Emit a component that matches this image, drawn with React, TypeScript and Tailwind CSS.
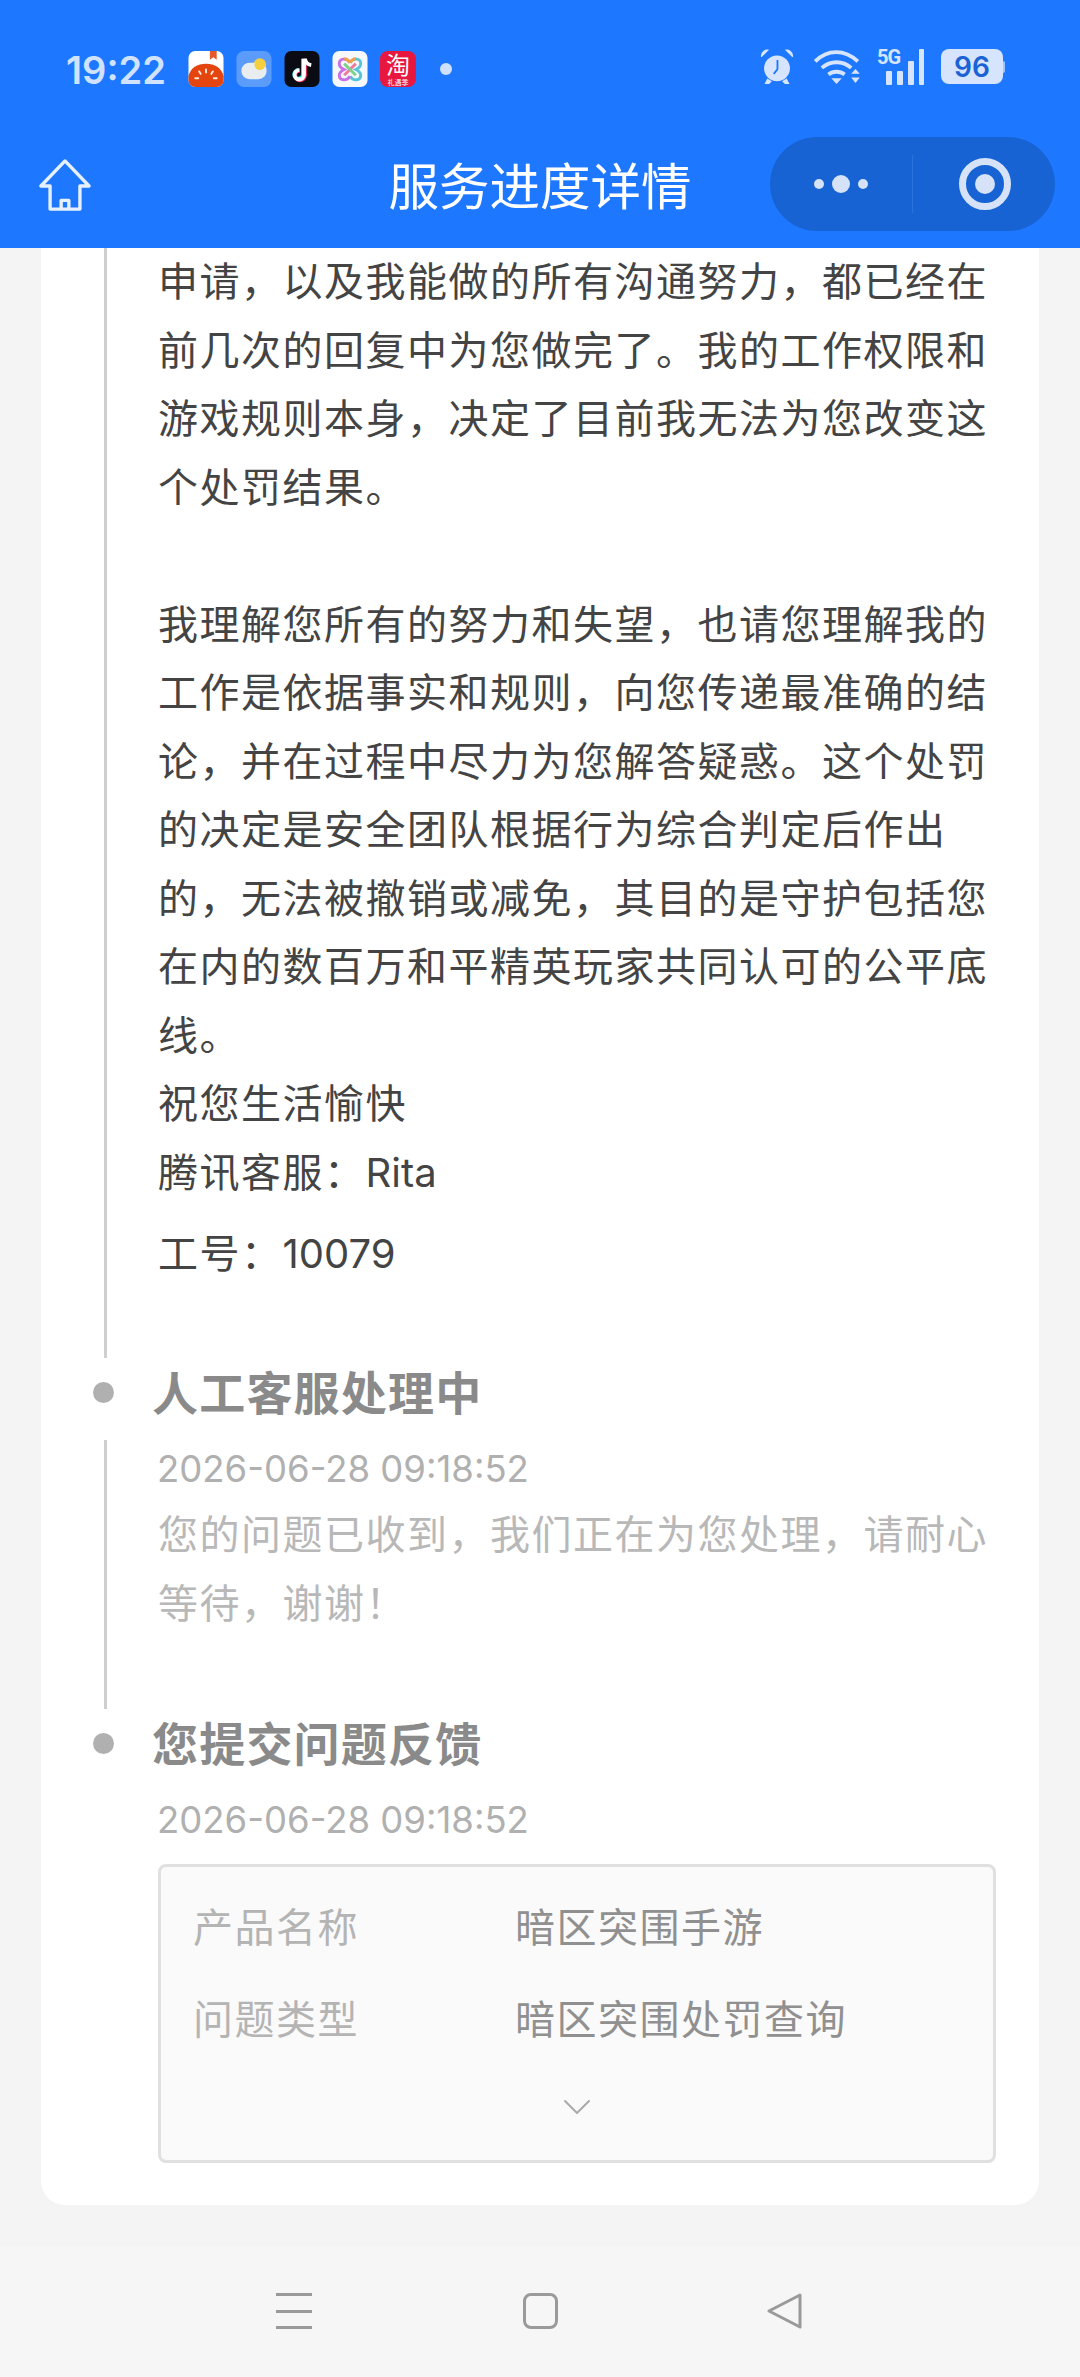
import { ChevronDown } from "lucide-react";

const cjk = "font-['Inter','Noto_Sans_CJK_SC',sans-serif]";

function StatusApps() {
  return (
    <div className="flex items-center gap-[12px] -translate-x-[1px] -translate-y-[1px]">
      {/* tomato novel */}
      <svg width="36" height="36" viewBox="0 0 36 37">
        <rect width="36" height="37" rx="7" fill="#fff" />
        <path d="M0 30V26C2 17 9 13 18 13s16 4 18 13v4a7 7 0 0 1-7 7H7a7 7 0 0 1-7-7z" fill="#e4450f" />
        <path d="M22 0h7v9l-3.500-2.500L22 9z" fill="#e4592b" />
        <g stroke="#ffe9d8" strokeWidth="2" strokeLinecap="round">
          <path d="M18 19v3M11 21l1.500 2.500M25 21l-1.500 2.500M7 28h3M26 28h3" />
        </g>
      </svg>
      {/* weather */}
      <svg width="36" height="36" viewBox="0 0 36 37">
        <rect width="36" height="37" rx="8" fill="#5b9cfb" />
        <circle cx="24" cy="14" r="6.500" fill="#f6cf3f" />
        <rect x="5" y="12" width="26" height="17" rx="8.500" fill="#e9edf0" />
        <circle cx="24" cy="14" r="5.500" fill="#f6cf3f" />
      </svg>
      {/* douyin */}
      <svg width="36" height="36" viewBox="0 0 36 37">
        <rect width="36" height="37" rx="7" fill="#0b0b14" />
        <path d="M19 8v16a4.500 4.500 0 1 1-4.500-4.500" fill="none" stroke="#26e0de" strokeWidth="4" />
        <path d="M21 8v17a5 5 0 1 1-5-5" fill="none" stroke="#f5305c" strokeWidth="4" />
        <path d="M20 8v16.500a4.800 4.800 0 1 1-4.800-4.800" fill="none" stroke="#fff" strokeWidth="4" />
        <path d="M21 8c.5 3.500 3 6 6.500 6.500" fill="none" stroke="#fff" strokeWidth="4" />
      </svg>
      {/* multicolour knot */}
      <svg width="36" height="36" viewBox="0 0 36 37">
        <rect width="36" height="37" rx="7" fill="#f6f8fb" />
        <path d="M18 12c3-5 11-5 11 1 0 3-3 5-5 6 2 1 5 3 5 6 0 6-8 6-11 1" fill="none" stroke="#58c4d8" strokeWidth="3" />
        <path d="M18 12c-3-5-11-5-11 1 0 3 3 5 5 6-2 1-5 3-5 6 0 6 8 6 11 1" fill="none" stroke="#c872e4" strokeWidth="3" />
        <path d="M12 8c2 0 4 1 6 4M24 8c-2 0-4 1-6 4" fill="none" stroke="#f2a04a" strokeWidth="3" />
        <path d="M24 13 12 25" stroke="#f27a9a" strokeWidth="3" />
        <path d="M12 13l12 12" stroke="#7fd08a" strokeWidth="3" />
      </svg>
      {/* taobao */}
      <div className="w-[36px] h-[36px] rounded-[8px] bg-[#e8173f] flex flex-col items-center">
        <span className="text-[24px] leading-[26px] text-white font-['Noto_Sans_CJK_SC',sans-serif]">淘</span>
        <div className="w-full h-[10px] text-[7px] leading-[10px] text-center text-white font-['Noto_Sans_CJK_SC',sans-serif]">礼遇季</div>
      </div>
      <div className="ml-[12px] w-[12px] h-[12px] rounded-full bg-[#cfe0fb]" />
    </div>
  );
}

function StatusRight() {
  return (
    <div className="flex items-center text-[#d6e5fd]">
      <svg width="36" height="37" viewBox="0 0 37 40" fill="currentColor">
        <circle cx="18.500" cy="22" r="14" />
        <path d="M1 9a7 7 0 0 1 9-7L1.800 10zM36 9a7 7 0 0 0-9-7l8.200 8z" />
        <path d="M8 33 5 39h5l3-3zM29 33l3 6h-5l-3-3z" />
        <path d="M19 13v10l-4 5" fill="none" stroke="#1e78ff" strokeWidth="2" />
      </svg>
      <svg className="ml-[17px]" width="50" height="36" viewBox="0 0 50 38" fill="none" stroke="currentColor" strokeWidth="4">
        <path d="M2 13C15 0 33 0 47 13" />
        <path d="M9 20c9-8 22-8 31 0" />
        <path d="M16 27c5-4 12-4 17 0" />
        <path d="M19 31h11l-5.500 6z" fill="currentColor" stroke="none" />
        <path d="M40 26h9l-4.500-5zM40 30h9l-4.500 6z" fill="currentColor" stroke="none" />
      </svg>
      <div className="relative ml-[15px] w-[47px] h-[36px]">
        <span className="absolute left-0 top-[-4px] text-[20px] leading-[24px] font-bold tracking-[-1px] font-['Roboto',sans-serif]">5G</span>
        <div className="absolute inset-0 flex items-end justify-end gap-[5px]">
          <div className="w-[6px] h-[14px] rounded-[1px] bg-current" />
          <div className="w-[6px] h-[14px] rounded-[1px] bg-current" />
          <div className="w-[6px] h-[24px] rounded-[1px] bg-current" />
          <div className="w-[5px] h-[36px] rounded-[1px] bg-current" />
        </div>
      </div>
      <div className="ml-[17px] flex items-center">
        <div className="w-[62px] h-[35px] rounded-[8px] bg-current flex items-center justify-center">
          <span className="text-[28px] leading-none font-semibold text-[#1a62d6] font-['Inter',sans-serif]">96</span>
        </div>
        <div className="w-[2px] h-[12px] rounded-r-[2px] bg-current opacity-70" />
      </div>
    </div>
  );
}

function Header() {
  return (
    <header className="bg-[#1e78ff] h-[248px] shrink-0">
      <div className="h-[137px] pl-[66px] pr-[75px] pt-[48px] flex justify-between items-start">
        <div className="flex items-center h-[44px]">
          <span className="w-[123px] text-[38px] leading-none font-semibold text-[#d0e2fd] font-['Inter',sans-serif]">19:22</span>
          <StatusApps />
        </div>
        <StatusRight />
      </div>
      <div className="relative h-[94px] flex items-center justify-center">
        <svg className="absolute left-[38px] top-[22px] text-[#e6f0ff]" width="54" height="52" viewBox="0 0 54 54" fill="none" stroke="currentColor" strokeWidth="3.500" strokeLinejoin="round">
          <path d="M27 2 2 28h9.500v24h31V28H52z" />
          <path d="M23 52V43h8v9" />
        </svg>
        <h1 className="text-[50.5px] leading-none text-white font-['Noto_Sans_CJK_SC',sans-serif] -translate-y-[1px]">服务进度详情</h1>
        <div className="absolute left-[770px] top-0 w-[285px] h-[94px] rounded-full bg-[#1763d4] flex items-center text-[#d5e2f8]">
          <div className="w-[142px] flex items-center justify-center gap-[8px]">
            <div className="w-[10px] h-[10px] rounded-full bg-current" />
            <div className="w-[18px] h-[18px] rounded-full bg-current" />
            <div className="w-[10px] h-[10px] rounded-full bg-current" />
          </div>
          <div className="w-px h-[58px] bg-[#2a72dc]" />
          <div className="flex-1 flex items-center justify-center pl-[2px]">
            <div className="w-[52px] h-[52px] rounded-full border-[7px] border-current flex items-center justify-center">
              <div className="w-[20px] h-[20px] rounded-full bg-current" />
            </div>
          </div>
        </div>
      </div>
    </header>
  );
}

function Rail({ className }: { className: string }) {
  return <div className={`absolute left-[63px] w-[3px] bg-[#cfcfcf] ${className}`} />;
}

function StepTitle({ children }: { children: string }) {
  return (
    <div className="relative h-[56px] flex items-center pl-[111px]">
      <div className="absolute left-[52px] w-[21px] h-[21px] rounded-full bg-[#b0b0b0]" />
      <h2 className="text-[46px] leading-[56px] tracking-[1.2px] font-bold text-[#8a8a8a]">{children}</h2>
    </div>
  );
}

function BoxRow({ label, value }: { label: string; value: string }) {
  return (
    <div className="flex h-[92px] items-center">
      <span className="w-[322px] text-[#b4b4b4]">{label}</span>
      <span className="text-[#909090]">{value}</span>
    </div>
  );
}

export default function App() {
  return (
    <div className={`h-[2377px] w-[1080px] flex flex-col overflow-hidden bg-[#f4f4f4] ${cjk}`}>
      <Header />
      <main className="flex-1 min-h-0">
        <div className="relative mx-[41px] h-[1957px] bg-white rounded-b-[24px]">
          <Rail className="top-0 h-[1110px]" />
          <div className="pl-[117px] pr-[40px] text-[40px] leading-[68.5px] tracking-[1.5px] text-[#444444]">
            <p>申请，以及我能做的所有沟通努力，都已经在前几次的回复中为您做完了。我的工作权限和游戏规则本身，决定了目前我无法为您改变这个处罚结果。</p>
            <p className="mt-[68.5px]">我理解您所有的努力和失望，也请您理解我的工作是依据事实和规则，向您传递最准确的结论，并在过程中尽力为您解答疑惑。这个处罚的决定是安全团队根据行为综合判定后作出的，无法被撤销或减免，其目的是守护包括您在内的数百万和平精英玩家共同认可的公平底线。</p>
            <p>祝您生活愉快</p>
            <p>腾讯客服：<span className="tracking-normal">Rita</span></p>
            <p className="mt-[13px]">工号：<span className="tracking-normal">10079</span></p>
          </div>

          <div className="mt-[76px]">
            <StepTitle>人工客服处理中</StepTitle>
            <div className="relative pl-[116px] pr-[40px] pt-[20px] h-[295px]">
              <Rail className="top-[19px] h-[269px]" />
              <p className="text-[36.5px] leading-[56px] text-[#b0b0b0]">2026-06-28 09:18:52</p>
              <p className="mt-[3px] pl-[1px] text-[40px] leading-[69px] tracking-[1.5px] text-[#b8b8b8]">您的问题已收到，我们正在为您处理，请耐心等待，谢谢！</p>
            </div>
            <StepTitle>您提交问题反馈</StepTitle>
            <div className="pl-[116px] pr-[43px] pt-[20px]">
              <p className="text-[36.5px] leading-[56px] text-[#b0b0b0]">2026-06-28 09:18:52</p>
              <div className="ml-[1px] mt-[16px] h-[299px] rounded-[8px] border-[3px] border-[#e0e0e0] bg-[#fafafa] px-[32px] pt-[15px] text-[40px] tracking-[1.5px]">
                <BoxRow label="产品名称" value="暗区突围手游" />
                <BoxRow label="问题类型" value="暗区突围处罚查询" />
                <div className="mt-[17px] flex justify-center">
                  <ChevronDown className="w-[48px] h-[48px] text-[#aaaaaa]" strokeWidth={1} />
                </div>
              </div>
            </div>
          </div>
        </div>
      </main>
      <nav className="h-[131px] shrink-0 bg-[#f6f6f6] flex items-start pt-[47px]">
        <div className="ml-[276px] flex flex-col justify-between w-[36px] h-[36px]">
          <div className="h-[3px] bg-[#9a9a9a]" />
          <div className="h-[3px] bg-[#9a9a9a]" />
          <div className="h-[3px] bg-[#9a9a9a]" />
        </div>
        <div className="ml-[211px] w-[35px] h-[36px] rounded-[8px] border-[3px] border-[#9a9a9a]" />
        <svg className="ml-[209px]" width="36" height="36" viewBox="0 0 36 36" fill="none" stroke="#9a9a9a" strokeWidth="3" strokeLinejoin="round">
          <path d="M33 2 2 18l31 16z" />
        </svg>
      </nav>
    </div>
  );
}
